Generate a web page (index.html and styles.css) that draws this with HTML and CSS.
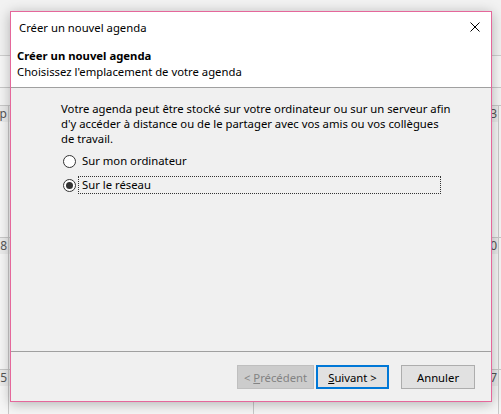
FILE: index.html
```html
<!DOCTYPE html>
<html lang="fr">
<head>
<meta charset="utf-8">
<title>Créer un nouvel agenda</title>
<link rel="stylesheet" href="styles.css">
</head>
<body>
<div class="calendar">
  <div class="cal-top"></div>
  <div class="cal-head"></div>
  <div class="cal-sub"></div>
  <div class="week">
    <div class="day first"><div class="num">p</div></div>
    <div class="day"><div class="num"></div></div>
    <div class="day"><div class="num">3</div></div>
    <div class="day last"></div>
  </div>
  <div class="week">
    <div class="day first"><div class="num">8</div></div>
    <div class="day"><div class="num"></div></div>
    <div class="day"><div class="num">10</div></div>
    <div class="day last"></div>
  </div>
  <div class="week">
    <div class="day first"><div class="num">5</div></div>
    <div class="day"><div class="num"></div></div>
    <div class="day"><div class="num">17</div></div>
    <div class="day last"></div>
  </div>
</div>

<div class="dialog">
  <div class="titlebar">
    <span class="title">Créer un nouvel agenda</span>
    <span class="close">
      <svg width="10" height="10" viewBox="0 0 10 10"><path d="M0.5 0.5 L9.5 9.5 M9.5 0.5 L0.5 9.5" stroke="#000" stroke-width="1" fill="none"/></svg>
    </span>
  </div>
  <div class="header">
    <div class="header-title">Créer un nouvel agenda</div>
    <div class="header-sub">Choisissez l'emplacement de votre agenda</div>
  </div>
  <div class="content">
    <p class="intro">Votre agenda peut être stocké sur votre ordinateur ou sur un serveur afin<br>d'y accéder à distance ou de le partager avec vos amis ou vos collègues<br>de travail.</p>
    <div class="options">
      <div class="option">
        <svg class="radio" width="13" height="13" viewBox="0 0 13 13"><circle cx="6.5" cy="6.5" r="6" fill="#fff" stroke="#333" stroke-width="1"/></svg>
        <span class="label">Sur mon ordinateur</span>
      </div>
      <div class="option">
        <svg class="radio" width="13" height="13" viewBox="0 0 13 13"><circle cx="6.5" cy="6.5" r="6" fill="#fff" stroke="#333" stroke-width="1"/><circle cx="6.5" cy="6.5" r="3.5" fill="#333"/></svg>
        <span class="label focused">Sur le réseau</span>
      </div>
    </div>
  </div>
  <div class="footer">
    <button class="btn disabled" disabled>&lt; <u>P</u>récédent</button>
    <button class="btn primary"><u>S</u>uivant &gt;</button>
    <button class="btn cancel">Annuler</button>
  </div>
</div>
</body>
</html>
```
FILE: styles.css
```css
html, body {
  margin: 0;
  padding: 0;
}
body {
  width: 501px;
  height: 414px;
  overflow: hidden;
  position: relative;
  background: #f4f4f4;
  font-family: "Noto Sans", "Segoe UI", sans-serif;
  font-size: 11.3px;
  color: #000;
}

/* background calendar */
.calendar {
  width: 501px;
  height: 414px;
  overflow: hidden;
}
.cal-top {
  height: 55px;
  background: #f2f2f2;
  border-bottom: 1px solid #cfcfcf;
}
.cal-head {
  height: 31px;
  background: #f7f7f7;
  border-bottom: 1px solid #c8c8c8;
}
.cal-sub {
  height: 17px;
  background: #f4f4f4;
}
.week {
  display: flex;
  height: 132px;
  box-sizing: border-box;
  border-top: 1px solid #c8c8c8;
  background: #f6f6f6;
}
.day {
  box-sizing: border-box;
  width: 245px;
  border-right: 1px solid #c8c8c8;
  overflow: hidden;
}
.day.first {
  width: 9px;
}
.day.last {
  flex: 1;
  border-right: none;
}
.num {
  height: 16px;
  background: #ebebeb;
  display: flex;
  justify-content: flex-end;
  white-space: nowrap;
  padding-right: 1px;
  color: #555;
  font-size: 12px;
  line-height: 16px;
}

/* dialog */
.dialog {
  position: absolute;
  left: 10px;
  top: 11px;
  width: 482px;
  height: 391px;
  box-sizing: border-box;
  border: 1px solid #e5679b;
  background: #f0f0f0;
  box-shadow: 0 2px 12px rgba(0, 0, 0, 0.28);
  display: flex;
  flex-direction: column;
}
.titlebar {
  height: 30px;
  flex: none;
  background: #fff;
  display: flex;
  align-items: center;
  padding-left: 8px;
}
.title {
  flex: 1;
}
.close {
  width: 32px;
  height: 30px;
  display: flex;
  align-items: center;
  justify-content: center;
}
.close svg {
  display: block;
}
.header {
  flex: none;
  background: #fff;
  padding: 6px 6px 7px;
  line-height: 16px;
  border-bottom: 1px solid #a0a0a0;
}
.header-title {
  font-weight: bold;
}
.content {
  flex: 1;
  padding: 13px 20px 0 50px;
  line-height: 15px;
}
.intro {
  margin: 0;
  white-space: nowrap;
}
.options {
  margin-top: 6px;
  display: flex;
  flex-direction: column;
  gap: 6px;
}
.option {
  display: flex;
  align-items: center;
  height: 18px;
}
.radio {
  display: block;
  margin-left: 2px;
  margin-right: 2px;
}
.label {
  box-sizing: border-box;
  width: 363px;
  height: 18px;
  line-height: 16px;
  padding: 0 3px;
  border: 1px dotted transparent;
}
.label.focused {
  border-color: #333;
}
.footer {
  flex: none;
  height: 50px;
  box-sizing: border-box;
  border-top: 1px solid #a0a0a0;
  display: flex;
  justify-content: flex-end;
  align-items: flex-start;
  padding: 13px 16px 0 0;
}
.btn {
  box-sizing: border-box;
  height: 24px;
  font-family: inherit;
  font-size: 11.3px;
  color: #000;
  background: #e1e1e1;
  border: 1px solid #adadad;
  padding: 0;
  margin: 0;
}
.btn u {
  text-decoration-thickness: 1px;
}
.btn.disabled {
  width: 77px;
  background: #cccccc;
  border-color: #bfbfbf;
  color: #838383;
}
.btn.primary {
  width: 73px;
  margin-left: 2px;
  border: 2px solid #0078d7;
}
.btn.cancel {
  width: 74px;
  margin-left: 12px;
}
```
